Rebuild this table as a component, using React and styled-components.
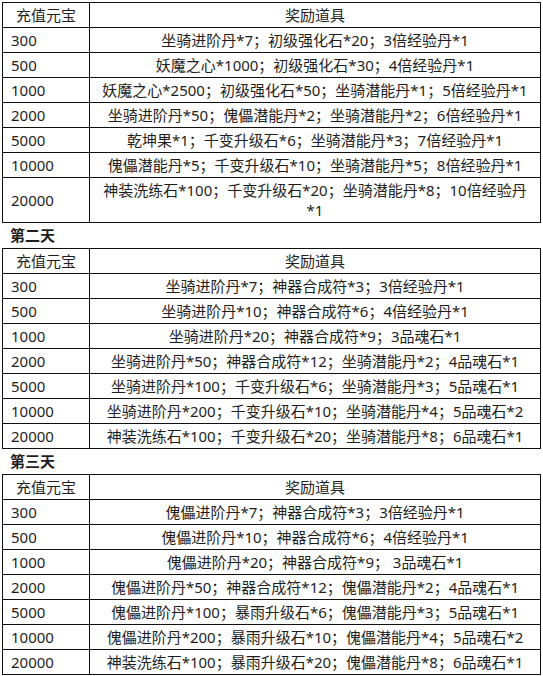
import React from 'react';
import styled, { createGlobalStyle } from 'styled-components';

const GlobalStyle = createGlobalStyle`
  body {
    margin: 0;
    background: #fff;
    font-family: "Noto Sans", "Noto Sans CJK SC", sans-serif;
    color: #1e1e1e;
  }
`;

const Page = styled.div`
  padding: 2px 0 0 2px;
  width: 539px;
`;

const Table = styled.table`
  width: 539px;
  border-collapse: collapse;
  table-layout: fixed;
  font-size: 15px;
`;

const Cell = styled.td`
  border: 1px solid #111;
  padding: 2px 8px;
  line-height: 20px;
  height: 20px;
  text-align: ${(p) => (p.center ? 'center' : 'left')};
  vertical-align: middle;
  white-space: normal;
`;

const DayTitle = styled.div`
  height: 25px;
  line-height: 25px;
  padding-left: 8px;
  font-size: 15px;
  font-weight: bold;
`;

const days = [
  {
    title: null,
    rows: [
      ['300', '坐骑进阶丹*7；初级强化石*20；3倍经验丹*1'],
      ['500', '妖魔之心*1000；初级强化石*30；4倍经验丹*1'],
      ['1000', '妖魔之心*2500；初级强化石*50；坐骑潜能丹*1；5倍经验丹*1'],
      ['2000', '坐骑进阶丹*50；傀儡潜能丹*2；坐骑潜能丹*2；6倍经验丹*1'],
      ['5000', '乾坤果*1；千变升级石*6；坐骑潜能丹*3；7倍经验丹*1'],
      ['10000', '傀儡潜能丹*5；千变升级石*10；坐骑潜能丹*5；8倍经验丹*1'],
      ['20000', '神装洗练石*100；千变升级石*20；坐骑潜能丹*8；10倍经验丹*1'],
    ],
  },
  {
    title: '第二天',
    rows: [
      ['300', '坐骑进阶丹*7；神器合成符*3；3倍经验丹*1'],
      ['500', '坐骑进阶丹*10；神器合成符*6；4倍经验丹*1'],
      ['1000', '坐骑进阶丹*20；神器合成符*9；3品魂石*1'],
      ['2000', '坐骑进阶丹*50；神器合成符*12；坐骑潜能丹*2；4品魂石*1'],
      ['5000', '坐骑进阶丹*100；千变升级石*6；坐骑潜能丹*3；5品魂石*1'],
      ['10000', '坐骑进阶丹*200；千变升级石*10；坐骑潜能丹*4；5品魂石*2'],
      ['20000', '神装洗练石*100；千变升级石*20；坐骑潜能丹*8；6品魂石*1'],
    ],
  },
  {
    title: '第三天',
    rows: [
      ['300', '傀儡进阶丹*7；神器合成符*3；3倍经验丹*1'],
      ['500', '傀儡进阶丹*10；神器合成符*6；4倍经验丹*1'],
      ['1000', '傀儡进阶丹*20；神器合成符*9； 3品魂石*1'],
      ['2000', '傀儡进阶丹*50；神器合成符*12；傀儡潜能丹*2；4品魂石*1'],
      ['5000', '傀儡进阶丹*100；暴雨升级石*6；傀儡潜能丹*3；5品魂石*1'],
      ['10000', '傀儡进阶丹*200；暴雨升级石*10；傀儡潜能丹*4；5品魂石*2'],
      ['20000', '神装洗练石*100；暴雨升级石*20；傀儡潜能丹*8；6品魂石*1'],
    ],
  },
];

function RewardTable({ rows }) {
  return (
    <Table>
      <colgroup>
        <col style={{ width: 87 }} />
        <col />
      </colgroup>
      <tbody>
        <tr>
          <Cell center>充值元宝</Cell>
          <Cell center>奖励道具</Cell>
        </tr>
        {rows.map(([amount, reward]) => (
          <tr key={amount}>
            <Cell>{amount}</Cell>
            <Cell center>{reward}</Cell>
          </tr>
        ))}
      </tbody>
    </Table>
  );
}

export default function App() {
  return (
    <Page>
      <GlobalStyle />
      {days.map((day, i) => (
        <React.Fragment key={i}>
          {day.title && <DayTitle>{day.title}</DayTitle>}
          <RewardTable rows={day.rows} />
        </React.Fragment>
      ))}
    </Page>
  );
}
